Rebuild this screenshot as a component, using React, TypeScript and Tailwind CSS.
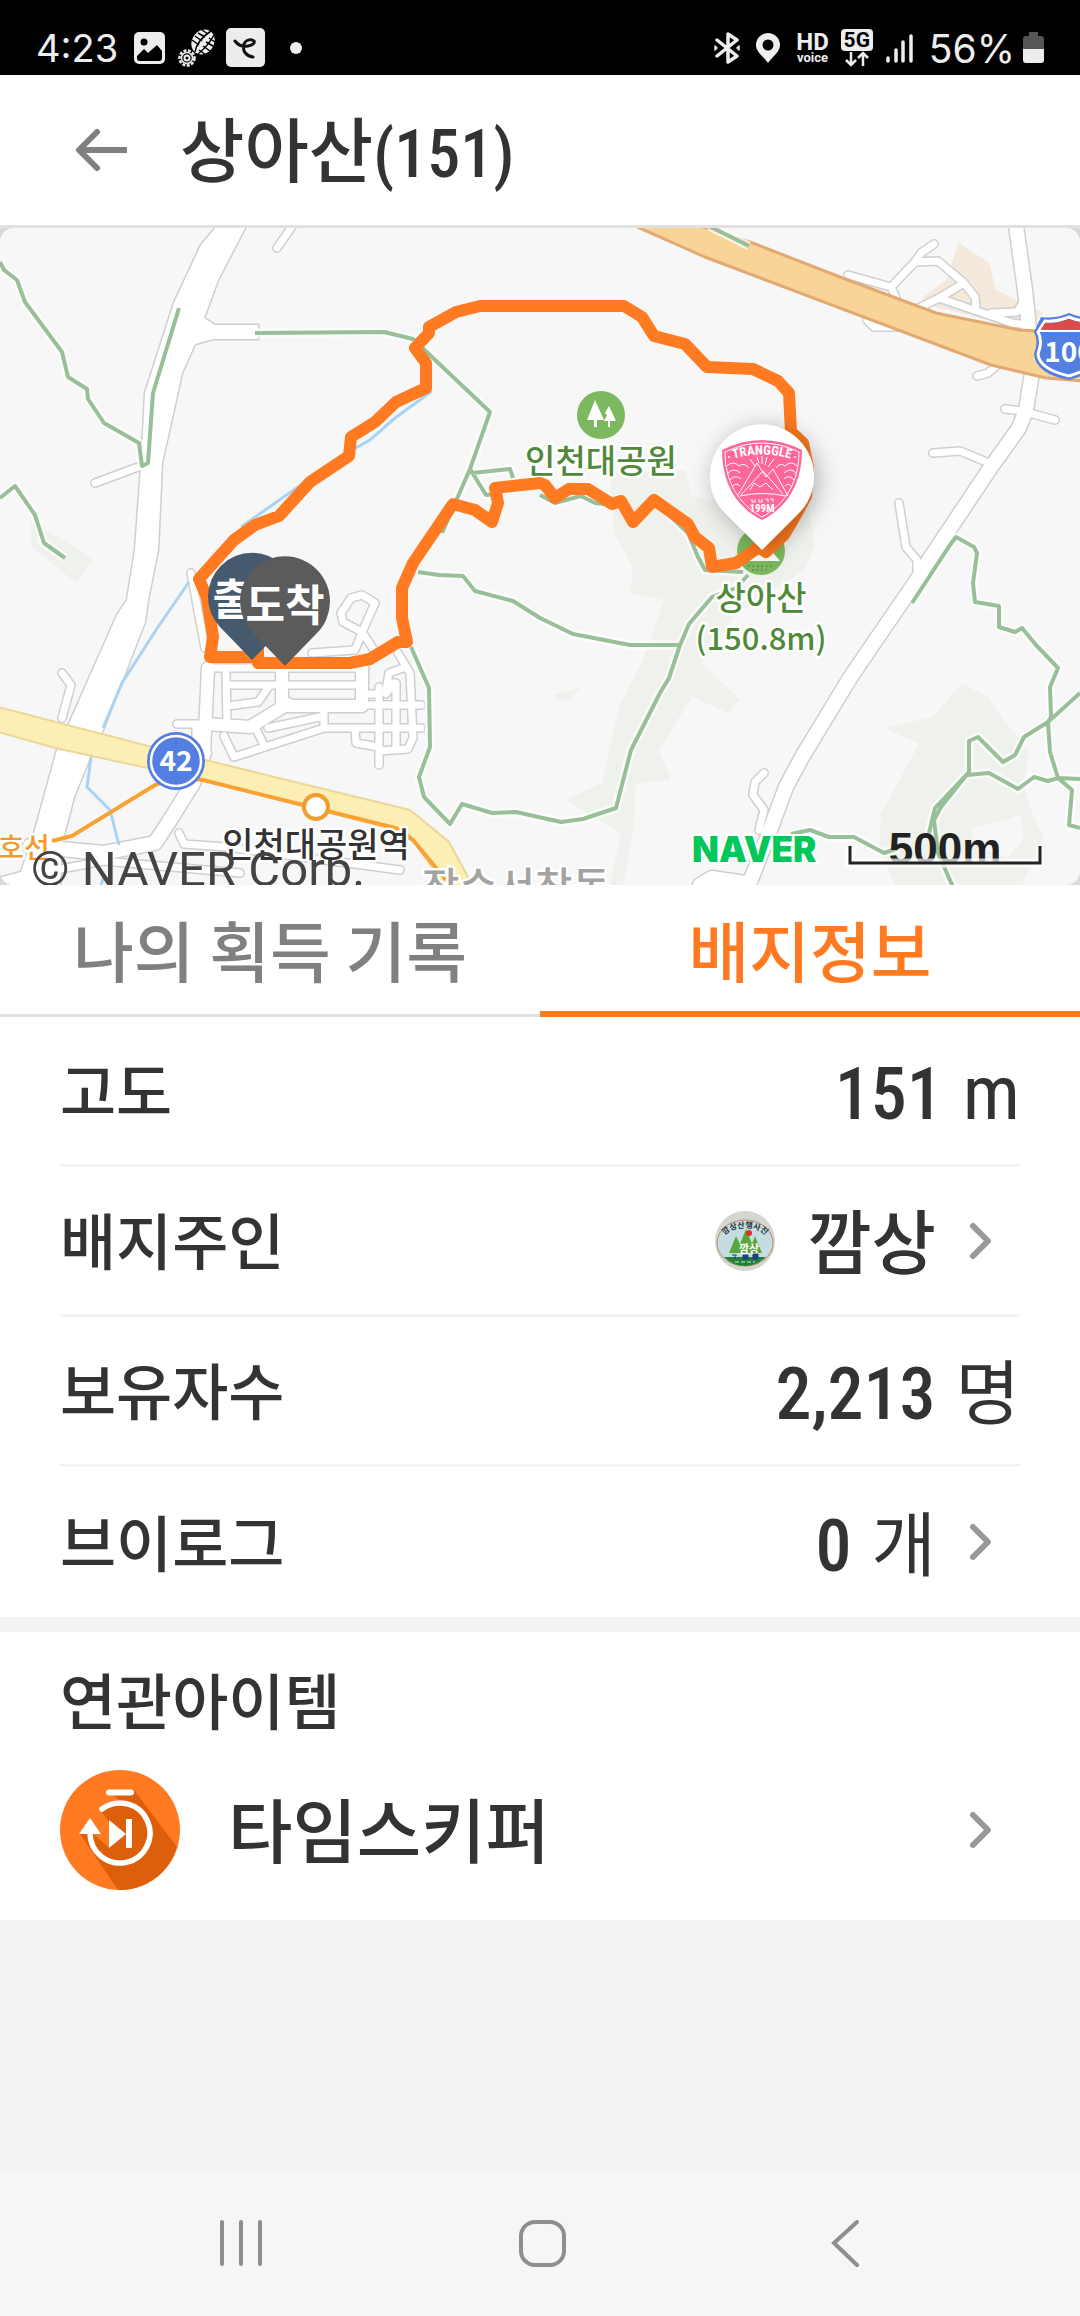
import React from 'react';

interface RowProps {
  label: string;
  children: React.ReactNode;
  href?: string;
  last?: boolean;
}

// road centre lines, drawn once as a grey casing and once as the white surface
const SMALL_ROADS = [
  'M208 440H365M226 445L227 495M227 457H362M362 466H374M284 479L255 499',
  'M229 496H177M227 478L258 474L270 457M255 499L265 519M324 482V500M268 500L324 488',
  'M224 508L234 529L265 519L324 500H421M379 459V537M379 519L356 515L355 500M396 455V520M196 500V522',
  'M398 425L410 445L413 510L408 521L379 523M386 462L389 445L406 439M386 466L394 455M362 477H421',
  'M312 425L355 422L363 402L375 375L362 367L351 370L341 385L343 394L362 404L374 422',
  'M62 445L71 457L62 490M95 255L138 239M277 20L293 -3M191 345L205 420',
  'M848 47L891 59L915 34L921 25L934 16M915 34L938 33L964 55L975 69L976 82M964 55L939 70L919 80M939 70L1012 95L1027 97M991 85L1017 84L1022 76M891 59L896 70M867 92L874 99H900',
  'M1005 181L1022 183L1055 192M933 225L960 223L989 235M899 275L906 319L917 332V345M764 545L755 554L753 567L764 582L759 602M977 148L988 145L995 139',
  'M179 605L184 616L226 619L400 642M24 648L103 633L240 645',
].join('');

const VILLAGE_ROADS = 'M208 440L204 525M282 440V478M362 440V474M284 478H362M288 476L250 499L206 496';

const MAIN_ROADS = [
  'M1016 -2L1025 62L1029 100M1032 145L1026 182L1019 200L991 239L929 332L919 349L871 419L850 450L802 529L786 559L769 605L752 649L747 660',
  'M204 525L193 555L172 589L155 615L103 625L30 618',
  'M700 657L712 650L745 655',
].join('');

const LEFT_ROAD =
  'M217 -2L201 17L174 75L145 165L142 225L135 322L127 372L117 387L72 489L57 522L33 609L21 644L-2 650V662H60L62 615L74 569L91 527L103 502L145 394L148 372L158 322L162 235L182 145L195 116L213 111H258V97H215L204 90L218 52L246 -2Z';

const TRAILS = [
  'M0 34L4 42L17 52L25 74L62 124L68 149L87 161L88 171L104 195L139 215L142 238L148 235L153 165L179 80',
  'M0 270L15 258L35 287L44 315L65 330',
  'M255 105L384 104L413 111L490 184L470 241L442 305M472 245L510 241L513 250M470 241L486 267L498 266',
  'M418 344L439 347L463 348L475 363L513 373L540 390L573 406L630 417H680',
  'M411 419L429 460L430 519L419 549L424 569L450 596L462 576L492 585L516 584L561 594L583 591L616 580L631 522L660 465L669 450L680 417L689 396L712 369L736 360L748 347',
  'M540 267L555 275L581 268L595 275L612 277M667 285L688 305L698 329L705 342L743 344',
  'M912 375L950 317L956 309L974 319L977 325L973 355L975 374L999 378V399L1015 404L1022 400L1036 417L1058 440L1050 459L1051 489L1048 494L1050 524L1058 550L1072 562L1069 597L1080 600',
  'M1080 465L1048 494L1024 509L1015 527L1003 534L978 509L969 513V544L935 580L929 605M969 544L941 579L934 592L938 625L953 659',
  'M967 547L989 545L1018 561L1034 549L1048 553L1058 550L1080 551',
  'M791 606L810 602L829 609H854L884 625L898 620M709 -2L749 18',
].join('');

const ROUTE =
  'M480 78L456 84L429 99V105L415 120L426 135V160L396 174L375 194L351 209L349 228L310 254L279 288L255 297L234 312L199 351L207 370L213 409L210 429H258V435H350L370 431L398 414H407L402 390V360L413 335L453 276L475 282L492 294L498 275L495 260L540 255L545 257L555 270L569 261H588L612 276L621 273L633 294L654 272L688 296L695 309L709 320L712 339L736 335L759 319L766 324L784 307L793 292L806 268L808 240L803 215L791 204L789 165L778 153L753 141L707 139L685 116L654 108L642 89L624 78Z';

const MAP_FONT = "'Noto Sans CJK KR', sans-serif";

const StatusBar: React.FC = () => (
  <div className="flex h-[75px] items-center justify-between bg-black px-9 pt-[21px] text-[#ededed] font-['Inter',sans-serif]">
    <div className="flex items-center">
      <span className="text-[38px] leading-none">4:23</span>
      <svg className="ml-4 h-8 w-8" viewBox="0 0 32 32">
        <rect width="31" height="32" rx="5" fill="#ededed" />
        <circle cx="10" cy="10" r="3.5" fill="#000" />
        <path d="M3 24L10 17L14 21L23 13L28 19V26Q28 29 25 29H6Q3 29 3 26Z" fill="#000" />
      </svg>
      <svg className="ml-3 h-10 w-10" viewBox="0 0 40 40" fill="none" stroke="#ededed">
        <ellipse cx="25" cy="14" rx="11" ry="13" transform="rotate(35 25 14)" fill="#ededed" stroke="none" />
        <path d="M17 24Q19 12 33 3M20 26Q30 18 36 7" stroke="#000" strokeWidth="1.5" />
        <path d="M14 12L21 17M17 8L24 13M20 5L27 9M24 2L30 6M21 22L28 27M25 18L32 23M28 14L35 18M31 10L37 14" stroke="#000" strokeWidth="1.5" />
        <circle cx="9" cy="30" r="7.5" strokeWidth="2.5" strokeDasharray="3 1.5" />
        <circle cx="9" cy="30" r="5.5" strokeWidth="1.5" />
        <circle cx="9" cy="30" r="2.5" strokeWidth="2" />
      </svg>
      <svg className="ml-2 h-10 w-10" viewBox="0 0 40 40">
        <rect width="39" height="39" rx="5" fill="#ededed" />
        <path d="M9 13C12 17 17 19 22 18C27 17 29 15 28 13C26 11 20 11 18 16C16 23 20 28 27 29" fill="none" stroke="#111" strokeWidth="3" strokeLinecap="round" />
      </svg>
      <span className="ml-6 h-3 w-3 rounded-full bg-[#ededed]" />
    </div>
    <div className="flex items-center">
      <svg className="h-8 w-[26px]" viewBox="0 0 26 32" fill="none" stroke="#ededed" strokeWidth="3.5" strokeLinejoin="round" strokeLinecap="round">
        <path d="M3 8L23 24L14 30V2L23 8L3 24" />
        <path d="M1 14V18L3 16ZM25 14V18L23 16Z" strokeWidth="1.5" />
      </svg>
      <svg className="ml-4 h-8 w-6" viewBox="0 0 24 32">
        <path d="M12 1A12 12 0 0 0 0 13C0 20 7 24 12 31C17 24 24 20 24 13A12 12 0 0 0 12 1ZM12 7.500A5.500 5.500 0 1 1 12 18.500A5.500 5.500 0 0 1 12 7.500Z" fill="#ededed" fillRule="evenodd" />
      </svg>
      <span className="ml-4 flex flex-col items-center font-['Roboto',sans-serif] font-bold">
        <span className="text-[24px] leading-[18px]">HD</span>
        <span className="text-[13px] leading-[13px]">voice</span>
      </span>
      <span className="ml-3 flex flex-col items-center font-['Roboto',sans-serif] font-bold">
        <span className="w-8 rounded bg-[#ededed] text-center text-[21px] leading-[22px] text-black">5G</span>
        <svg className="h-4 w-8" viewBox="0 0 32 16" fill="none" stroke="#ededed" strokeWidth="2.500">
          <path d="M10 1V14M5 9L10 14L15 9M22 15V2M17 7L22 2L27 7" />
        </svg>
      </span>
      <svg className="ml-3 h-8 w-7" viewBox="0 0 28 32" stroke="#ededed" strokeWidth="3.500" strokeLinecap="round">
        <path d="M3 26V29M11 18V29M18 10V29M26 4V29" />
      </svg>
      <span className="ml-4 text-[39px] leading-none">56%</span>
      <svg className="ml-2 h-8 w-[21px]" viewBox="0 0 21 32">
        <path d="M6 0H15V4H18Q21 4 21 7V17H0V7Q0 4 3 4H6Z" fill="#555" />
        <path d="M0 17H21V28Q21 31 18 31H3Q0 31 0 28Z" fill="#ededed" />
      </svg>
    </div>
  </div>
);

const BadgePin: React.FC = () => (
  <g>
    <path d="M762 322L726 286A52 52 0 1 1 798 286Z" fill="#fff" filter="url(#pinShadow)" />
    <path d="M722 222Q762 202 802 222C802 255 788 279 762 292C736 279 722 255 722 222Z" fill="#ff6699" />
    <path d="M725 224Q762 206 799 224C799 253 786 276 762 289C738 276 725 253 725 224Z" fill="none" stroke="#fff" strokeWidth="1" />
    <path id="badgeArc" d="M727 233Q762 220 797 233" fill="none" />
    <text fontFamily="'Roboto Condensed', 'Liberation Sans Narrow', sans-serif" fontWeight="700" fontSize="13" fill="#fff" textAnchor="middle">
      <textPath href="#badgeArc" startOffset="50%">TRANGGLE</textPath>
    </text>
    <circle cx="729" cy="229" r="1" fill="#fff" />
    <circle cx="795" cy="229" r="1" fill="#fff" />
    <g fill="none" stroke="#fff" strokeWidth="1">
      <path d="M738 267L757 235L766 249L773 241L788 268M741 267L763 243L783 266M750 262L754 255L760 259L766 255L773 262M740 268Q762 263 786 268" />
      <path d="M750 231L755 238M757 229L759 235M762 228V236M767 229L765 237M774 231L768 239" />
      <path d="M727 238Q733 232 739 238Q744 234 749 240M728 245Q734 239 740 245M730 252Q735 246 741 251M732 259Q736 254 740 258M797 238Q791 232 785 238Q780 234 776 240M796 245Q790 239 784 245M794 252Q789 246 784 251M792 259Q788 254 785 258" />
      <path d="M752 271V274H755V271M759 271V274H762V271M765 271H768V274M770 271H773V274" />
    </g>
    <text x="762" y="284" fontFamily="'Roboto Condensed', 'Liberation Sans Narrow', sans-serif" fontWeight="700" fontSize="11" fill="#fff" textAnchor="middle">199M</text>
  </g>
);

const CourseMap: React.FC = () => (
  <div className="bg-[#d9d9d9]">
    <svg className="block h-auto w-full rounded-[14px]" viewBox="0 0 1080 657" role="img" aria-label="상아산 코스 지도">
      <defs>
        <filter id="pinShadow" x="-60%" y="-60%" width="220%" height="220%">
          <feDropShadow dx="4" dy="4" stdDeviation="12" floodColor="#000" floodOpacity="0.3" />
        </filter>
      </defs>
      <rect width="1080" height="657" fill="#f7f7f7" />

      <g fill="#eff2ec">
        <path d="M609 245L685 242L692 269L733 275L809 279L815 319L805 342L778 359L733 389L702 435L740 472L728 485L692 469L659 522L671 552L636 555L633 605L623 657H610L621 605L566 572L602 555L619 479L643 432L664 372L630 365L633 339L614 305Z" />
        <path d="M962 455L988 469L1003 492L1029 522L1024 555L1031 582L1043 609L1022 657H895L879 622L881 585L898 555L919 515L884 500L933 489Z" />
        <path d="M31 295L69 315L93 332L76 355L48 332L31 320ZM553 467L580 459L572 470L560 474Z" />
      </g>
      <path d="M970 600L1005 592L1020 587L1024 610L1008 630L975 618Z" fill="#f7f7f7" />
      <path d="M958 14L989 35L996 62L1044 85L1022 100L936 79L922 70L946 52L953 32Z" fill="#f5e8dd" />

      <g fill="none" stroke="#cfcfcf" strokeLinecap="round" strokeLinejoin="round">
        <path d={MAIN_ROADS} strokeWidth="17" />
        <path d={VILLAGE_ROADS} strokeWidth="15" />
        <path d={SMALL_ROADS} strokeWidth="10" />
        <path d={LEFT_ROAD} strokeWidth="3" />
      </g>
      <g fill="none" stroke="#fff" strokeLinecap="round" strokeLinejoin="round">
        <path d={MAIN_ROADS} strokeWidth="14" />
        <path d={VILLAGE_ROADS} strokeWidth="12" />
        <path d={SMALL_ROADS} strokeWidth="7" />
        <path d={LEFT_ROAD} fill="#fff" stroke="none" />
      </g>

      <path d="M432 163L395 190L370 212L345 226L305 254L241 299M189 354L158 399L122 455L103 500M91 529L87 559L110 582L119 617M104 648L100 660" fill="none" stroke="#a9d3f3" strokeWidth="3" />
      <path d="M-2 479L152 519L410 582L449 614L474 660H446L408 605L203 552L55 520L-2 504Z" fill="#fdeeb3" stroke="#ead79a" strokeWidth="2" />
      <path d="M635 -2L705 29L991 137L1046 150L1082 153V105L1019 102L936 85L840 49L750 14L700 -2Z" fill="#f8d497" stroke="#e2aa72" strokeWidth="3" />

      <path d={TRAILS} fill="none" stroke="#fff" strokeWidth="9" strokeLinejoin="round" opacity="0.7" />
      <path d={TRAILS} fill="none" stroke="#98bf98" strokeWidth="4" strokeLinejoin="round" />

      <path d="M52 613L72 608L155 557L176 549L203 552L303 577L396 600L413 612L446 652" fill="none" stroke="#f7a233" strokeWidth="4" />
      <circle cx="316" cy="579" r="12" fill="#fff" stroke="#ef9e30" strokeWidth="4" />

      <circle cx="176" cy="533" r="29" fill="#527fe0" />
      <circle cx="176" cy="533" r="25" fill="none" stroke="#fff" strokeWidth="2.500" />
      <path d="M1041 89Q1055 91 1069 85Q1083 91 1097 89L1102 105Q1099 113 1104 128Q1102 143 1069 152Q1036 146 1034 126Q1039 113 1034 104Z" fill="#527fe0" />
      <path d="M1045 93Q1057 94 1069 89Q1081 94 1093 93L1098 105Q1095 113 1100 128Q1098 139 1069 148Q1039 141 1038 126Q1043 113 1038 104Z" fill="#527fe0" stroke="#fff" strokeWidth="3" />
      <path d="M1041 101L1045 95Q1057 96 1069 91Q1081 96 1093 95V101Z" fill="#dc4b4b" />
      <path d="M1038 103H1100" stroke="#fff" strokeWidth="2" />

      <g fontFamily={MAP_FONT} textAnchor="middle" stroke="#fff" strokeWidth="5" strokeLinejoin="round" paintOrder="stroke">
        <g fontWeight="500" fontSize="33" fill="#4f8a3a">
          <text x="601" y="245">인천대공원</text>
          <text x="761" y="382">상아산</text>
          <text x="761" y="422" fontSize="31">(150.8m)</text>
        </g>
        <text x="316" y="629" fontWeight="500" fontSize="34" fill="#333">인천대공원역</text>
        <text x="24" y="630" fontWeight="500" fontSize="28" fill="#f39a2b">호선</text>
        <text x="516" y="674" fontWeight="500" fontSize="41" fill="#a3a3a3">장수서창동</text>
      </g>
      <g fontFamily={MAP_FONT} fontWeight="700" fontSize="28" fill="#fff" textAnchor="middle">
        <text x="176" y="543">42</text>
        <text x="1069" y="134">100</text>
      </g>

      <circle cx="601" cy="187" r="24" fill="#7cb85f" />
      <path d="M595 172L604 192H597V199H594V192H587ZM609 178L616 193H610V199H608V193H604L607 187L605 185Z" fill="#fff" />
      <circle cx="761" cy="323" r="24" fill="#7cb85f" />
      <path d="M744 333L756 318L762 325L768 319L780 333Z" fill="#fff" />
      <path d="M748 338H774M752 342H770" stroke="#4f8a3a" strokeWidth="1.500" strokeDasharray="1.500 3" />

      <path d={ROUTE} fill="none" stroke="#ff7a20" strokeWidth="12" strokeLinejoin="round" />
      <path d="M258 418H264V434H258Z" fill="#ff7a20" />

      <BadgePin />

      <g fontFamily={MAP_FONT} fontWeight="700" fontSize="43" fill="#fff" textAnchor="middle">
        <path d="M252 432L220 399A44 44 0 1 1 284 399Z" fill="#465a6d" />
        <text x="252" y="387">출발</text>
        <path d="M285 438L253 405A45 45 0 1 1 317 405Z" fill="#5b5b5b" />
        <text x="285" y="393">도착</text>
      </g>

      <text x="31" y="658" fontFamily="Roboto, sans-serif" fontSize="49" fill="#444">© NAVER Corp.</text>
      <text x="692" y="634" fontFamily="Inter, sans-serif" fontWeight="900" fontSize="35" fill="#03c75a" stroke="#fff" strokeWidth="4" paintOrder="stroke">NAVER</text>
      <text x="945" y="636" fontFamily="'Liberation Sans', sans-serif" fontWeight="700" fontSize="44" fill="#222" textAnchor="middle">500m</text>
      <path d="M850 618V635H1040V618" fill="none" stroke="#fff" strokeWidth="9" opacity="0.7" />
      <path d="M850 618V635H1040V618" fill="none" stroke="#222" strokeWidth="3" />
    </svg>
  </div>
);

const Chevron: React.FC = () => (
  <svg className="mr-7 ml-8 h-10 w-6 shrink-0" viewBox="0 0 24 40" fill="none" stroke="#999" strokeWidth="6" strokeLinecap="round" strokeLinejoin="round">
    <path d="M5 5L20 20L5 35" />
  </svg>
);

const Row: React.FC<RowProps> = ({ label, children, href, last }) => {
  const content = (
    <>
      <span className="pb-1 text-[61px] leading-none font-medium">{label}</span>
      <span className="flex items-center">
        {children}
        {href && <Chevron />}
      </span>
    </>
  );
  const rowClass = `flex h-[150px] items-center justify-between ${last ? '' : 'border-b-[3px] border-[#f1f3f5]'}`;

  return (
    <li>
      {href ? <a href={href} className={rowClass}>{content}</a> : <div className={rowClass}>{content}</div>}
    </li>
  );
};

const Amount: React.FC<{ value: string; unit: string; latin?: boolean }> = ({ value, unit, latin }) => (
  <span className="flex items-baseline gap-5 pt-1">
    <span className="text-[72px] leading-none font-medium font-['Roboto_Condensed','Liberation_Sans_Narrow',sans-serif]">{value}</span>
    {latin ? (
      <span className="text-[76px] leading-none font-['Roboto_Condensed','Liberation_Sans_Narrow',sans-serif]">{unit}</span>
    ) : (
      <span className="text-[70px] leading-none">{unit}</span>
    )}
  </span>
);

const OwnerAvatar: React.FC = () => (
  <svg className="mr-8 h-[60px] w-[60px] rounded-full" viewBox="0 0 60 60">
    <rect width="60" height="60" fill="#d5d6d0" />
    <ellipse cx="30" cy="32" rx="28" ry="23" fill="#c5dde0" stroke="#b98a63" strokeWidth="1" />
    <path d="M9 46H51Q42 55 30 55Q18 55 9 46Z" fill="#23803b" />
    <path d="M14 42L21 25L25 33L31 18L37 33L40 25L47 42Z" fill="#58a838" />
    <circle cx="34" cy="22" r="3" fill="#e0322a" />
    <path id="ownerArc" d="M6 32Q10 17 30 17Q50 17 54 32" fill="none" />
    <text fontFamily={MAP_FONT} fontWeight="700" fontSize="8" fill="#2a3338" textAnchor="middle">
      <textPath href="#ownerArc" startOffset="50%">깜상산행사진</textPath>
    </text>
    <text x="34" y="42" fontFamily={MAP_FONT} fontWeight="700" fontSize="11" fill="#fff" textAnchor="middle">깜상</text>
    <path d="M17 44H22M20 44V48M28 44H33V48H28ZM38 43H43V48H38Z" fill="#1e3f86" stroke="#1e3f86" strokeWidth="1" />
    <path d="M20 51H40" stroke="#8fc79a" strokeWidth="1.500" strokeDasharray="4 2" />
  </svg>
);

const TimeSkipperIcon: React.FC = () => (
  <svg className="h-[120px] w-[120px] shrink-0" viewBox="0 0 120 120">
    <circle cx="60" cy="60" r="60" fill="#ff7a20" />
    <path d="M74 20L117 77A60 60 0 0 1 58 120L20 64L31 62L49 78V52L41 41L60 31L53 25H70Z" fill="#dd5f0c" />
    <g fill="none" stroke="#fff" strokeLinecap="round">
      <path d="M49 22.500H71" strokeWidth="6" />
      <path d="M42 39A30 30 0 1 1 30 63" strokeWidth="5.500" />
    </g>
    <path d="M30 48L41 64H19ZM49 50L66 64L49 78ZM66 49H72V78H66Z" fill="#fff" />
  </svg>
);

const App: React.FC = () => (
  <div className="flex min-h-screen flex-col bg-[#f1f3f5] text-[#333] font-['Noto_Sans_CJK_KR',sans-serif]">
    <StatusBar />

    <header className="flex h-[153px] items-center border-b-[3px] border-[#e1e1e1] bg-white pl-[72px]">
      <button type="button" aria-label="뒤로" className="flex h-[60px] w-[60px] items-center justify-center">
        <svg className="h-12 w-14" viewBox="0 0 56 48" fill="none" stroke="#808080" strokeWidth="6">
          <path d="M4 24H53" />
          <path d="M23 6L5 24L23 42" strokeLinecap="round" strokeLinejoin="round" />
        </svg>
      </button>
      <h1 className="ml-12 flex items-baseline text-[70px] leading-none font-medium">
        상아산
        <span className="text-[66px] font-medium font-['Roboto_Condensed','Liberation_Sans_Narrow',sans-serif]">(151)</span>
      </h1>
    </header>

    <CourseMap />

    <nav className="grid h-[132px] grid-cols-2 bg-white text-[66px] leading-none font-medium">
      <button type="button" className="border-b-[3px] border-[#e1e1e1] pb-[3px] text-[#808080]">나의 획득 기록</button>
      <button type="button" className="border-b-[6px] border-[#ff7a20] text-[#ff7a20]">배지정보</button>
    </nav>

    <ul className="bg-white px-[60px]">
      <Row label="고도">
        <Amount value="151" unit="m" latin />
      </Row>
      <Row label="배지주인" href="#owner">
        <OwnerAvatar />
        <span className="pb-1 text-[70px] leading-none font-medium">깜상</span>
      </Row>
      <Row label="보유자수">
        <Amount value="2,213" unit="명" />
      </Row>
      <Row label="브이로그" href="#vlog" last>
        <Amount value="0" unit="개" />
      </Row>
    </ul>

    <section className="mt-[15px] bg-white px-[60px] pt-8 pb-[30px]">
      <h2 className="mb-9 text-[61px] leading-[70px] font-medium">연관아이템</h2>
      <a href="#item" className="flex items-center">
        <TimeSkipperIcon />
        <span className="ml-12 flex-1 pb-1 text-[70px] leading-none font-medium">타임스키퍼</span>
        <Chevron />
      </a>
    </section>

    <div className="mt-auto grid h-36 grid-cols-3 bg-[#f6f6f8] pr-[84px] pl-[90px]">
      <button type="button" aria-label="최근 앱" className="flex items-center justify-center">
        <svg className="h-12 w-12" viewBox="0 0 48 48" stroke="#8e8e8e" strokeWidth="4" strokeLinecap="round">
          <path d="M5 2V44M24 2V44M43 2V44" />
        </svg>
      </button>
      <button type="button" aria-label="홈" className="flex items-center justify-center">
        <svg className="h-12 w-12" viewBox="0 0 48 48" fill="none" stroke="#8e8e8e" strokeWidth="4">
          <rect x="2" y="2" width="43" height="43" rx="14" />
        </svg>
      </button>
      <button type="button" aria-label="뒤로 가기" className="flex items-center justify-center">
        <svg className="h-12 w-12" viewBox="0 0 48 48" fill="none" stroke="#8e8e8e" strokeWidth="4" strokeLinecap="round">
          <path d="M36 2L13 23L36 45" />
        </svg>
      </button>
    </div>
  </div>
);

export default App;
